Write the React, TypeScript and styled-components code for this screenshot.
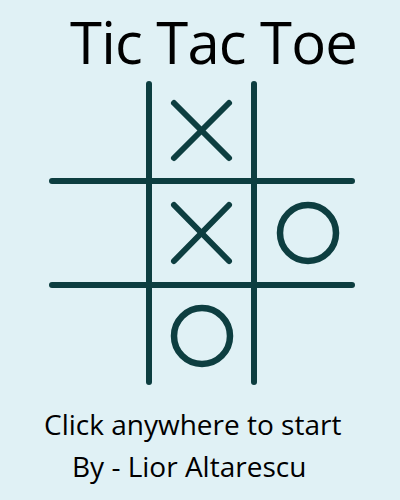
import React from "react";
import styled, { createGlobalStyle } from "styled-components";

const Global = createGlobalStyle`
  html, body { margin: 0; padding: 0; background: #e0f1f5; }
  body { width: 400px; height: 500px; overflow: hidden; }
`;

const Page = styled.div`
  width: 400px;
  height: 500px;
  background: #e0f1f5;
  display: flex;
  flex-direction: column;
  align-items: flex-start;
  font-family: "Open Sans", "Noto Sans", sans-serif;
  color: #000;
  cursor: pointer;
`;

const Title = styled.h1`
  margin: 4px 0 0 70px;
  font-size: 58px;
  font-weight: 400;
  line-height: 76px;
  letter-spacing: -0.8px;
  white-space: nowrap;
`;

const Board = styled.svg`
  display: block;
  margin: 1px 0 0 49px;
`;

const Footer = styled.div`
  display: flex;
  flex-direction: column;
  align-items: flex-start;
  margin-top: 16px;
`;

const Line = styled.p<{ $left: number }>`
  margin: 0 0 0 ${(p) => p.$left}px;
  font-size: 28px;
  line-height: 42px;
  font-weight: 400;
  white-space: nowrap;
`;

const INK = "#0d3e40";

export default function App() {
  return (
    <>
      <Global />
      <Page>
        <Title>Tic Tac Toe</Title>
        <Board width="310" height="306" viewBox="49 81 310 306">
          <g stroke={INK} strokeWidth="6" strokeLinecap="round" fill="none">
            <line x1="149" y1="84" x2="149" y2="382" />
            <line x1="254" y1="84" x2="254" y2="382" />
            <line x1="52" y1="181" x2="352" y2="181" />
            <line x1="52" y1="285" x2="352" y2="285" />
            <line x1="174" y1="103" x2="229" y2="158" />
            <line x1="229" y1="103" x2="174" y2="158" />
            <line x1="174" y1="205" x2="229" y2="261" />
            <line x1="229" y1="205" x2="174" y2="261" />
            <circle cx="308" cy="233" r="28" strokeWidth="6.5" />
            <circle cx="202" cy="336" r="28" strokeWidth="6.5" />
          </g>
        </Board>
        <Footer>
          <Line $left={44}>Click anywhere to start</Line>
          <Line $left={72}>By - Lior Altarescu</Line>
        </Footer>
      </Page>
    </>
  );
}
